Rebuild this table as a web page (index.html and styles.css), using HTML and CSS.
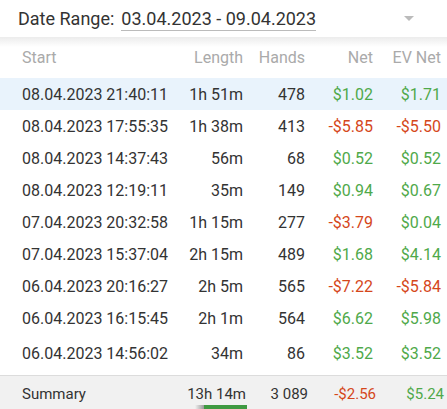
FILE: index.html
```html
<!DOCTYPE html>
<html>
<head>
<meta charset="utf-8">
<link rel="stylesheet" href="styles.css">
</head>
<body>
<div class="app">
  <div class="range">
    <span class="range-label">Date Range:</span>
    <span class="range-value">03.04.2023 - 09.04.2023</span>
    <span class="caret"></span>
  </div>
  <div class="table">
    <div class="row head">
      <span class="c-start">Start</span><span class="c-len">Length</span><span class="c-hands">Hands</span><span class="c-net">Net</span><span class="c-ev">EV Net</span>
    </div>
    <div class="row sel"><span class="c-start">08.04.2023 21:40:11</span><span class="c-len">1h 51m</span><span class="c-hands">478</span><span class="c-net pos">$1.02</span><span class="c-ev pos">$1.71</span></div>
    <div class="row"><span class="c-start">08.04.2023 17:55:35</span><span class="c-len">1h 38m</span><span class="c-hands">413</span><span class="c-net neg">-$5.85</span><span class="c-ev neg">-$5.50</span></div>
    <div class="row"><span class="c-start">08.04.2023 14:37:43</span><span class="c-len">56m</span><span class="c-hands">68</span><span class="c-net pos">$0.52</span><span class="c-ev pos">$0.52</span></div>
    <div class="row"><span class="c-start">08.04.2023 12:19:11</span><span class="c-len">35m</span><span class="c-hands">149</span><span class="c-net pos">$0.94</span><span class="c-ev pos">$0.67</span></div>
    <div class="row"><span class="c-start">07.04.2023 20:32:58</span><span class="c-len">1h 15m</span><span class="c-hands">277</span><span class="c-net neg">-$3.79</span><span class="c-ev pos">$0.04</span></div>
    <div class="row"><span class="c-start">07.04.2023 15:37:04</span><span class="c-len">2h 15m</span><span class="c-hands">489</span><span class="c-net pos">$1.68</span><span class="c-ev pos">$4.14</span></div>
    <div class="row"><span class="c-start">06.04.2023 20:16:27</span><span class="c-len">2h 5m</span><span class="c-hands">565</span><span class="c-net neg">-$7.22</span><span class="c-ev neg">-$5.84</span></div>
    <div class="row"><span class="c-start">06.04.2023 16:15:45</span><span class="c-len">2h 1m</span><span class="c-hands">564</span><span class="c-net pos">$6.62</span><span class="c-ev pos">$5.98</span></div>
    <div class="row last"><span class="c-start">06.04.2023 14:56:02</span><span class="c-len">34m</span><span class="c-hands">86</span><span class="c-net pos">$3.52</span><span class="c-ev pos">$3.52</span></div>
  </div>
  <div class="summary">
    <div class="row sum"><span class="c-start">Summary</span><span class="c-len">13h 14m</span><span class="c-hands">3 089</span><span class="c-net neg">-$2.56</span><span class="c-ev pos">$5.24</span></div>
    <div class="bar"><span class="bar-shade"></span><span class="bar-fill"></span></div>
  </div>
</div>
</body>
</html>
```
FILE: styles.css
```css
html, body {
  margin: 0;
  padding: 0;
  background: #fff;
}
body {
  font-family: Roboto, "Noto Sans", sans-serif;
  color: #333;
  width: 447px;
  height: 409px;
  overflow: hidden;
}
.app {
  display: flex;
  flex-direction: column;
}
.range {
  display: flex;
  align-items: center;
  height: 37px;
  padding-left: 18px;
  font-size: 18px;
  color: #333;
}
.range-label {
  margin-right: 7px;
}
.range-value {
  border-bottom: 1px solid #bbb;
  line-height: 20px;
  padding-bottom: 1px;
  margin-top: 2px;
}
.caret {
  margin-left: auto;
  margin-right: 33px;
  width: 0;
  height: 0;
  border-left: 5px solid transparent;
  border-right: 5px solid transparent;
  border-top: 5px solid #bbb;
}
.table {
  display: flex;
  flex-direction: column;
  background: linear-gradient(#ececec, #fff 10px);
}
.row {
  display: flex;
  align-items: center;
  box-sizing: border-box;
  height: 32px;
  font-size: 16px;
}
.row.head {
  height: 41px;
  color: #aaa;
}
.row.sel {
  background: #e9f3fc;
}
.row.last {
  height: 41px;
  padding-bottom: 3px;
}
.c-start {
  width: 178px;
  padding-left: 22px;
}
.c-len {
  width: 43px;
  white-space: nowrap;
  display: flex;
  justify-content: flex-end;
}
.c-hands {
  width: 62px;
  text-align: right;
}
.c-net {
  width: 68px;
  text-align: right;
}
.c-ev {
  width: 68px;
  text-align: right;
}
.pos { color: #4fa94a; }
.neg { color: #d5471b; }
.summary {
  background: #f1f1f1;
  border-top: 1px solid #dcdcdc;
}
.row.sum {
  height: 29px;
  font-size: 15px;
  padding-top: 6px;
}
.row.sum .c-len { width: 46px; }
.bar {
  display: flex;
  height: 4px;
  padding-left: 195px;
}
.bar-shade {
  width: 9px;
  background: linear-gradient(to right, #f1f1f1, #9a9a9a);
}
.bar-fill {
  width: 43px;
  background: #3f9a42;
}
```
